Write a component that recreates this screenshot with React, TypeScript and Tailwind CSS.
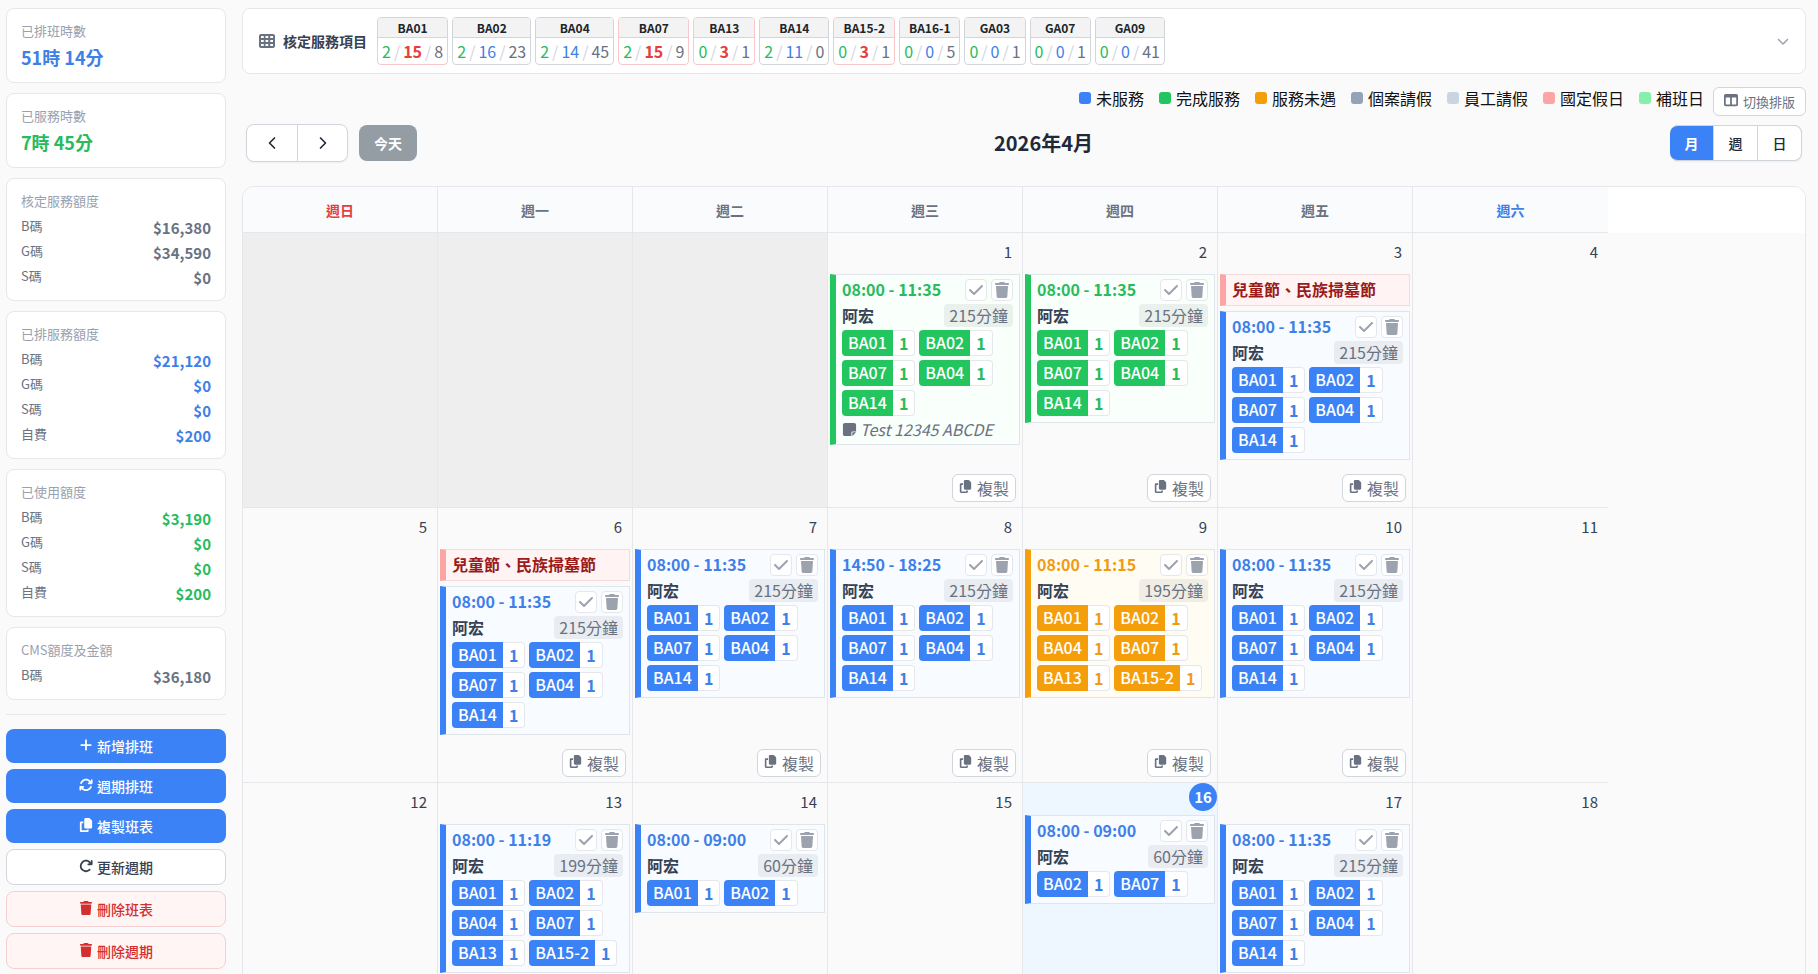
import { useState } from "react";
import {
  FaArrowRotateRight,
  FaArrowsRotate,
  FaCheck,
  FaChevronDown,
  FaCopy,
  FaNoteSticky,
  FaPlus,
  FaTableCells,
  FaTableColumns,
  FaTrash,
} from "react-icons/fa6";
import { ChevronLeft, ChevronRight } from "lucide-react";
import clsx from "clsx";

type Tone = "blue" | "green" | "orange";

type Shift = {
  time: string;
  minutes: number;
  tone: Tone;
  codes: string[];
  note?: string;
};

type Day = {
  date: number | null;
  today?: boolean;
  holiday?: string;
  shift?: Shift;
};

type ServiceItem = { code: string; done: number; planned: number; quota: number; over?: boolean };

const TONES: Record<Tone, { bar: string; text: string; chip: string; card: string }> = {
  blue: { bar: "border-l-[#3b82f6]", text: "text-[#3f7fe8]", chip: "bg-[#3b82f6]", card: "bg-[#f8fbff]" },
  green: { bar: "border-l-[#22c55e]", text: "text-[#28bb5d]", chip: "bg-[#22c55e]", card: "bg-[#f9fffa]" },
  orange: { bar: "border-l-[#f59e0b]", text: "text-[#ef9b16]", chip: "bg-[#f59e0b]", card: "bg-[#fffdf3]" },
};

const SERVICE_ITEMS: ServiceItem[] = [
  { code: "BA01", done: 2, planned: 15, quota: 8, over: true },
  { code: "BA02", done: 2, planned: 16, quota: 23 },
  { code: "BA04", done: 2, planned: 14, quota: 45 },
  { code: "BA07", done: 2, planned: 15, quota: 9, over: true },
  { code: "BA13", done: 0, planned: 3, quota: 1, over: true },
  { code: "BA14", done: 2, planned: 11, quota: 0 },
  { code: "BA15-2", done: 0, planned: 3, quota: 1, over: true },
  { code: "BA16-1", done: 0, planned: 0, quota: 5 },
  { code: "GA03", done: 0, planned: 0, quota: 1 },
  { code: "GA07", done: 0, planned: 0, quota: 1 },
  { code: "GA09", done: 0, planned: 0, quota: 41 },
];

const LEGEND = [
  { label: "未服務", color: "bg-[#3b82f6]" },
  { label: "完成服務", color: "bg-[#22c55e]" },
  { label: "服務未遇", color: "bg-[#f59e0b]" },
  { label: "個案請假", color: "bg-[#94a3b8]" },
  { label: "員工請假", color: "bg-[#cbd5e1]" },
  { label: "國定假日", color: "bg-[#fca5a5]" },
  { label: "補班日", color: "bg-[#86efac]" },
];

const WEEKDAYS = ["週日", "週一", "週二", "週三", "週四", "週五", "週六"];

const STANDARD = ["BA01", "BA02", "BA07", "BA04", "BA14"];
const EXTENDED = ["BA01", "BA02", "BA04", "BA07", "BA13", "BA15-2"];
const HOLIDAY = "兒童節、民族掃墓節";

const WEEKS: Day[][] = [
  [
    { date: null },
    { date: null },
    { date: null },
    { date: 1, shift: { time: "08:00 - 11:35", minutes: 215, tone: "green", codes: STANDARD, note: "Test 12345 ABCDE" } },
    { date: 2, shift: { time: "08:00 - 11:35", minutes: 215, tone: "green", codes: STANDARD } },
    { date: 3, holiday: HOLIDAY, shift: { time: "08:00 - 11:35", minutes: 215, tone: "blue", codes: STANDARD } },
    { date: 4 },
  ],
  [
    { date: 5 },
    { date: 6, holiday: HOLIDAY, shift: { time: "08:00 - 11:35", minutes: 215, tone: "blue", codes: STANDARD } },
    { date: 7, shift: { time: "08:00 - 11:35", minutes: 215, tone: "blue", codes: STANDARD } },
    { date: 8, shift: { time: "14:50 - 18:25", minutes: 215, tone: "blue", codes: STANDARD } },
    { date: 9, shift: { time: "08:00 - 11:15", minutes: 195, tone: "orange", codes: EXTENDED } },
    { date: 10, shift: { time: "08:00 - 11:35", minutes: 215, tone: "blue", codes: STANDARD } },
    { date: 11 },
  ],
  [
    { date: 12 },
    { date: 13, shift: { time: "08:00 - 11:19", minutes: 199, tone: "blue", codes: EXTENDED } },
    { date: 14, shift: { time: "08:00 - 09:00", minutes: 60, tone: "blue", codes: ["BA01", "BA02"] } },
    { date: 15 },
    { date: 16, today: true, shift: { time: "08:00 - 09:00", minutes: 60, tone: "blue", codes: ["BA02", "BA07"] } },
    { date: 17, shift: { time: "08:00 - 11:35", minutes: 215, tone: "blue", codes: STANDARD } },
    { date: 18 },
  ],
];

function HoursCard({ label, value, color }: { label: string; value: string; color: string }) {
  return (
    <div className="rounded-lg border border-gray-200 bg-white px-3.5 py-3">
      <p className="mb-1 text-[13px] leading-5 text-gray-400">{label}</p>
      <p className={clsx("text-lg leading-[25px] font-bold", color)}>{value}</p>
    </div>
  );
}

function QuotaCard({ label, rows, color }: { label: string; rows: [string, string][]; color: string }) {
  return (
    <div className="rounded-lg border border-gray-200 bg-white px-3.5 pt-3 pb-2">
      <p className="mb-1.5 text-[13px] leading-5 text-gray-400">{label}</p>
      <dl>
        {rows.map(([name, amount]) => (
          <div key={name} className="flex h-[25px] items-start justify-between">
            <dt className="text-[13px] leading-[18px] text-gray-500">{name}</dt>
            <dd className={clsx("text-[15px] leading-[22px] font-bold", color)}>{amount}</dd>
          </div>
        ))}
      </dl>
    </div>
  );
}

function Sidebar() {
  const base = "flex w-full items-center justify-center gap-1 rounded-lg text-sm font-medium";
  const primary = clsx(base, "h-[34px] bg-[#3b82f6] text-white");
  const danger = clsx(base, "h-9 border border-[#f8cfd0] bg-[#fff5f5] text-[#d32f2f]");

  return (
    <aside className="w-[220px] shrink-0">
      <div className="flex flex-col gap-2.5">
        <HoursCard label="已排班時數" value="51時 14分" color="text-[#3f7fe8]" />
        <HoursCard label="已服務時數" value="7時 45分" color="text-[#28bb5d]" />
        <QuotaCard label="核定服務額度" color="text-gray-500" rows={[["B碼", "$16,380"], ["G碼", "$34,590"], ["S碼", "$0"]]} />
        <QuotaCard label="已排服務額度" color="text-[#3f7fe8]" rows={[["B碼", "$21,120"], ["G碼", "$0"], ["S碼", "$0"], ["自費", "$200"]]} />
        <QuotaCard label="已使用額度" color="text-[#28bb5d]" rows={[["B碼", "$3,190"], ["G碼", "$0"], ["S碼", "$0"], ["自費", "$200"]]} />
        <QuotaCard label="CMS額度及金額" color="text-gray-500" rows={[["B碼", "$36,180"]]} />
      </div>
      <hr className="my-3.5 border-gray-200" />
      <div className="flex flex-col gap-1.5">
        <button type="button" className={primary}><FaPlus size={14} className="mb-[3px]" aria-hidden />新增排班</button>
        <button type="button" className={primary}><FaArrowsRotate size={14} className="mb-[3px]" aria-hidden />週期排班</button>
        <button type="button" className={primary}><FaCopy size={14} className="mb-[3px]" aria-hidden />複製班表</button>
        <button type="button" className={clsx(base, "h-9 border border-gray-300 bg-white text-gray-700")}>
          <FaArrowRotateRight size={14} className="mb-[3px]" aria-hidden />更新週期
        </button>
        <button type="button" className={danger}><FaTrash size={14} className="mb-[3px]" aria-hidden />刪除班表</button>
        <button type="button" className={danger}><FaTrash size={14} className="mb-[3px]" aria-hidden />刪除週期</button>
      </div>
    </aside>
  );
}

function ServiceChip({ item }: { item: ServiceItem }) {
  const border = item.over ? "border-[#f9c6cb]" : "border-gray-300";
  return (
    <div className={clsx("overflow-hidden rounded border bg-white", border)}>
      <div className={clsx("h-5 border-b bg-[#f3f3f3] text-center text-xs leading-5 font-bold text-[#212529]", border)}>
        {item.code}
      </div>
      <div className="flex h-[26px] items-center justify-center gap-[3px] px-1 text-base leading-[26px] text-gray-500">
        <span className="text-[#28bb5d]">{item.done}</span>
        <span className="text-gray-300">/</span>
        <span className={item.over ? "font-bold text-[#e53e3e]" : "text-[#3f7fe8]"}>{item.planned}</span>
        <span className="text-gray-300">/</span>
        <span>{item.quota}</span>
      </div>
    </div>
  );
}

function ShiftCard({ shift }: { shift: Shift }) {
  const tone = TONES[shift.tone];
  const iconBtn = "flex size-[22px] items-center justify-center rounded border border-gray-200 bg-white text-[#9ca3af]";
  return (
    <div className={clsx("border border-l-[6px] border-[#dfe5e8] px-1.5 pt-1 pb-1.5", tone.bar, tone.card)}>
      <div className="flex h-[22px] items-start gap-1">
        <span className={clsx("flex-1 text-base leading-5 font-bold whitespace-nowrap", tone.text)}>{shift.time}</span>
        <button type="button" aria-label="完成" className={iconBtn}><FaCheck size={16} /></button>
        <button type="button" aria-label="刪除" className={iconBtn}><FaTrash size={16} /></button>
      </div>
      <div className="my-[3px] flex h-[23px] items-center justify-between">
        <span className="text-base leading-[23px] font-bold text-gray-700">阿宏</span>
        <span className="rounded-sm bg-black/6 px-[5px] text-base leading-[23px] text-gray-500">{shift.minutes}分鐘</span>
      </div>
      <div className="flex flex-wrap gap-1">
        {shift.codes.map((code) => (
          <span key={code} className="flex h-[26px] text-base leading-6">
            <span className={clsx("rounded-l px-1.5 font-medium text-white", tone.chip)}>{code}</span>
            <span className={clsx("rounded-r border border-l-0 border-gray-200 bg-white px-1.5 font-bold", tone.text)}>1</span>
          </span>
        ))}
      </div>
      {shift.note && (
        <p className="mt-1 flex items-center gap-[3px] text-base leading-[18px] text-gray-500 italic">
          <FaNoteSticky size={15} aria-hidden />
          {shift.note}
        </p>
      )}
    </div>
  );
}

function DayCell({ day }: { day: Day }) {
  return (
    <td
      className={clsx(
        "border-r border-b border-gray-200 p-0 align-top nth-[7]:border-r-0",
        day.date === null && "bg-[#eeeeee]",
        day.today && "bg-[#eef6ff]",
      )}
    >
      <div className="flex min-h-[274px] flex-col px-0.5">
        {day.date !== null && (
          <div className={clsx("-mx-0.5 flex justify-end", day.today ? "mb-1" : "mb-[3px]")}>
            {day.today ? (
              <span className="size-7 rounded-full bg-[#3b82f6] text-center text-[15px] leading-7 font-bold text-white">{day.date}</span>
            ) : (
              <span className="px-2.5 text-[15px] leading-[38px] text-gray-700">{day.date}</span>
            )}
          </div>
        )}
        {day.holiday && (
          <div className="mb-[5px] h-8 border border-l-[6px] border-[#f1dcdd] border-l-[#fca5a5] bg-[#fff3f3] px-1.5 text-base leading-7 font-bold text-[#991b1b]">
            {day.holiday}
          </div>
        )}
        {day.shift && (
          <>
            <ShiftCard shift={day.shift} />
            <button
              type="button"
              className="mt-auto mr-1 mb-[5px] flex h-7 items-center gap-[5px] self-end rounded-md border border-gray-300 bg-white px-1.5 text-base text-gray-500"
            >
              <FaCopy size={13} className="mb-1" aria-hidden />
              複製
            </button>
          </>
        )}
      </div>
    </td>
  );
}

export default function App() {
  const [view, setView] = useState("月");

  return (
    <div className="flex h-screen gap-4 overflow-hidden bg-[#fafafa] pr-3 pl-1.5 font-['Noto_Sans_CJK_TC',sans-serif] *:pt-2">
      <Sidebar />

      <main className="min-w-0 flex-1 overflow-y-auto [scrollbar-width:none]">
        {/* Approved service items */}
        <section className="flex h-[66px] items-center rounded-lg border border-gray-200 bg-white px-4">
          <FaTableCells size={16} className="mr-2 text-gray-500" aria-hidden />
          <h2 className="mr-2.5 text-sm font-bold text-gray-700">核定服務項目</h2>
          <div className="flex gap-1">
            {SERVICE_ITEMS.map((item) => <ServiceChip key={item.code} item={item} />)}
          </div>
          <button type="button" aria-label="展開" className="ml-auto text-gray-400"><FaChevronDown size={12} /></button>
        </section>

        {/* Legend */}
        <div className="mt-[13px] flex h-[29px] items-center justify-end gap-[15px]">
          {LEGEND.map((item) => (
            <span key={item.label} className="mb-2 flex items-center gap-[5px] text-base leading-6 text-[#111111]">
              <span className={clsx("size-3 rounded-[3px]", item.color)} />
              {item.label}
            </span>
          ))}
          <button
            type="button"
            className="-ml-1.5 flex h-[29px] items-center gap-[5px] rounded-md border border-gray-300 bg-white px-2.5 text-[13px] text-gray-500"
          >
            <FaTableColumns size={14} className="mb-[3px]" aria-hidden />
            切換排版
          </button>
        </div>

        {/* Calendar toolbar */}
        <div className="mt-2 flex h-[38px] items-center justify-between px-1">
          <div className="flex items-center gap-[11px]">
            <div className="flex h-[38px] rounded-lg border border-gray-300 bg-white text-gray-800 shadow-xs">
              <button type="button" aria-label="上個月" className="flex w-[51px] items-center justify-center border-r border-gray-300">
                <ChevronLeft size={20} />
              </button>
              <button type="button" aria-label="下個月" className="flex w-[49px] items-center justify-center">
                <ChevronRight size={20} />
              </button>
            </div>
            <button type="button" className="h-9 rounded-lg bg-[#949ca4] px-[15px] text-sm font-bold text-white">今天</button>
          </div>
          <h1 className="text-xl font-bold text-gray-800">2026年4月</h1>
          <div className="flex h-9 rounded-lg border border-gray-300 text-sm font-medium shadow-xs">
            {["月", "週", "日"].map((v) => (
              <button
                key={v}
                type="button"
                onClick={() => setView(v)}
                className={clsx(
                  "-my-px w-11 border-y border-r border-gray-300 first:-ml-px first:rounded-l-lg last:-mr-px last:rounded-r-lg",
                  view === v ? "border-[#3b82f6] bg-[#3b82f6] font-bold text-white" : "bg-white text-gray-800",
                )}
              >
                {v}
              </button>
            ))}
          </div>
        </div>

        {/* Month grid */}
        <div className="mt-6 overflow-hidden rounded-xl border border-gray-200">
          <table className="w-full table-fixed border-separate border-spacing-0">
            <colgroup>
              {WEEKDAYS.map((d) => <col key={d} className="w-[12.484%]" />)}
              <col />
            </colgroup>
            <thead>
              <tr>
                {WEEKDAYS.map((d, i) => (
                  <th
                    key={d}
                    scope="col"
                    className={clsx(
                      "h-[46px] border-b border-gray-200 bg-[#f9fbfd] p-0 text-sm font-bold",
                      i < 6 && "border-r",
                      i === 0 ? "text-[#e53e3e]" : i === 6 ? "text-[#3f7fe8]" : "text-gray-500",
                    )}
                  >
                    {d}
                  </th>
                ))}
                <td className="bg-white" />
              </tr>
            </thead>
            <tbody>
              {WEEKS.map((week, w) => (
                <tr key={w}>
                  {week.map((day, i) => <DayCell key={i} day={day} />)}
                  <td />
                </tr>
              ))}
            </tbody>
          </table>
        </div>
      </main>
    </div>
  );
}
